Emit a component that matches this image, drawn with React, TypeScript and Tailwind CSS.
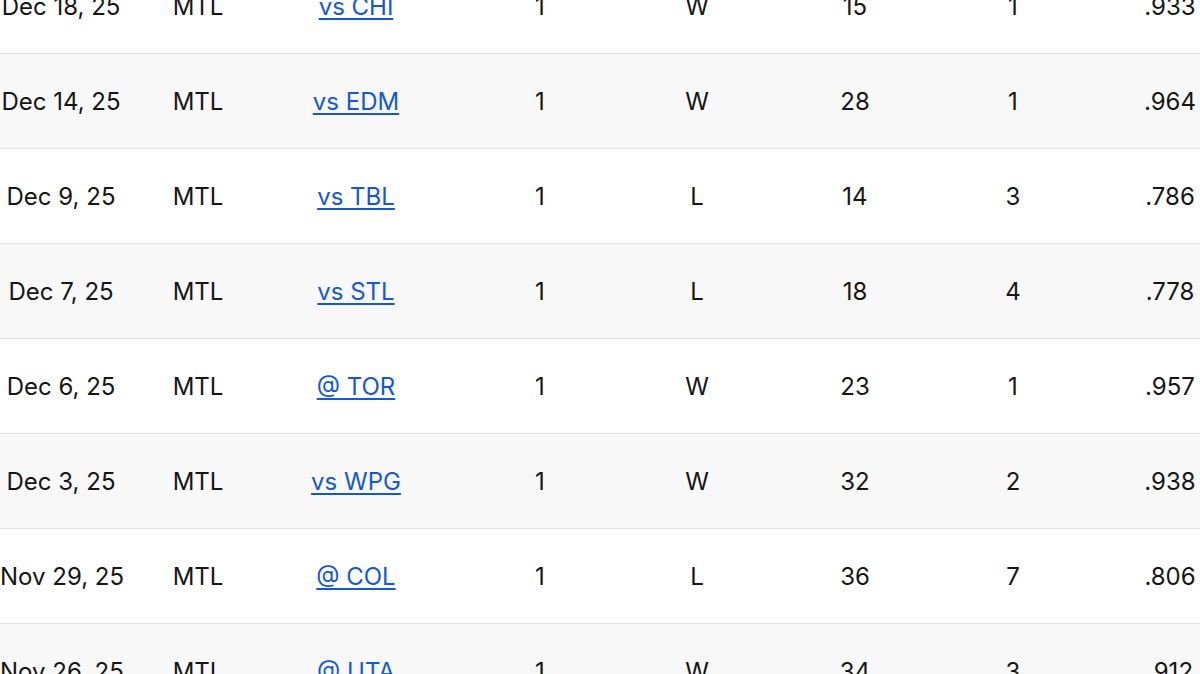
const rows = [
  ["Dec 18, 25", "MTL", "vs CHI", "1", "W", "15", "1", ".933"],
  ["Dec 14, 25", "MTL", "vs EDM", "1", "W", "28", "1", ".964"],
  ["Dec 9, 25", "MTL", "vs TBL", "1", "L", "14", "3", ".786"],
  ["Dec 7, 25", "MTL", "vs STL", "1", "L", "18", "4", ".778"],
  ["Dec 6, 25", "MTL", "@ TOR", "1", "W", "23", "1", ".957"],
  ["Dec 3, 25", "MTL", "vs WPG", "1", "W", "32", "2", ".938"],
  ["Nov 29, 25", "MTL", "@ COL", "1", "L", "36", "7", ".806"],
  ["Nov 26, 25", "MTL", "@ UTA", "1", "W", "34", "3", ".912"],
];

export default function App() {
  return (
    <div className="w-[1200px] h-[674px] overflow-hidden bg-white font-['Inter',sans-serif] text-[24px] text-[#161616]">
      <div className="mt-[-41px]">
        {rows.map((r, i) => (
          <div
            key={i}
            className={`grid grid-cols-[122px_152px_164px_204px_110px_206px_110px_204px] h-[95px] items-center border-b border-[#e2e2e2] ${
              i % 2 === 1 ? "bg-[#f8f8f8]" : "bg-white"
            }`}
          >
            {r.map((c, j) => (
              <div key={j} className="text-center whitespace-nowrap pt-px">
                {j === 2 ? (
                  <a href="#" className="text-[#1558d6] underline underline-offset-[3px]">
                    {c}
                  </a>
                ) : (
                  c
                )}
              </div>
            ))}
          </div>
        ))}
      </div>
    </div>
  );
}
